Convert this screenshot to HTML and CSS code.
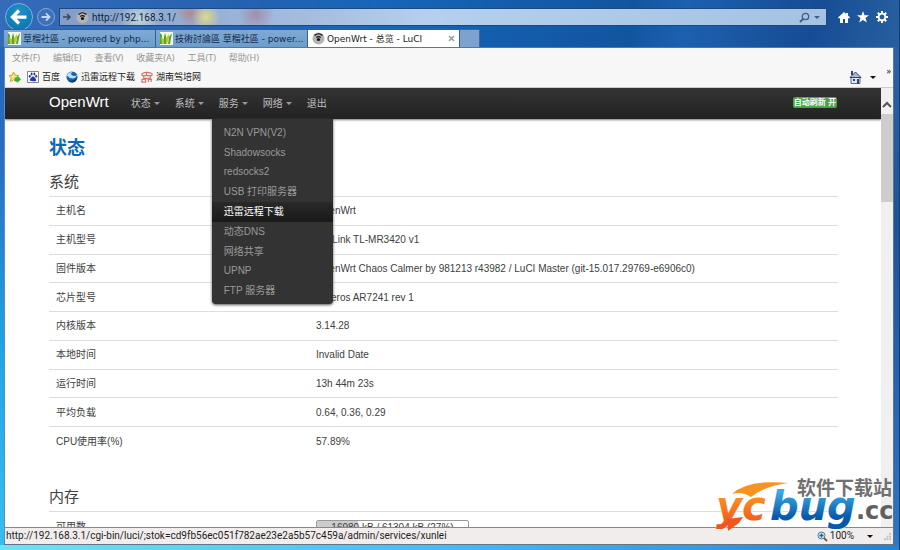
FILE: index.html
```
<!DOCTYPE html>
<html lang="zh-CN">
<head>
<meta charset="utf-8">
<title>OpenWrt - 总览 - LuCI</title>
<link rel="stylesheet" href="styles.css">
</head>
<body>
<svg class="defs" aria-hidden="true">
  <symbol id="leaf" viewBox="0 0 13 13"><path fill="#f3f8e8" d="M0 0h13v13H0z"/><path fill="#55a332" d="M0 1l2 2v9H0zM4 12V5l1-4 1 3v8zM8 12l1-7 3-4-1 5-1 6z"/><path fill="#b5cf2b" d="M2 12L1 5l3 2v5zM6 6l3-4v4l-2 6H6z"/></symbol>
  <symbol id="signal" viewBox="0 0 13 13"><circle cx="6.500" cy="6.500" r="6" fill="#b4b4b4"/><path d="M2.500 3.500q4-3.500 8 0M4.300 5.500q2.200-1.800 4.400 0" fill="none" stroke="#111" stroke-width="1.200"/><circle cx="6.500" cy="7.500" r="1.600" fill="#111"/></symbol>
</svg>
<div class="window">
  <header class="chrome">
    <div class="address-row">
      <button class="back" aria-label="后退"><svg viewBox="0 0 28 28"><path d="M22 14H8M14 7l-7 7 7 7" fill="none" stroke="#fff" stroke-width="3.500"/></svg></button>
      <button class="forward" aria-label="前进"><svg viewBox="0 0 18 18"><path d="M4 9h9M9 5l4 4-4 4" fill="none" stroke="#c3d9f2" stroke-width="2"/></svg></button>
      <div class="address">
        <svg class="go" viewBox="0 0 10 10"><path d="M1 5h7M5 2l3 3-3 3" fill="none" stroke="#39485e" stroke-width="1.500"/></svg>
        <svg class="fav"><use href="#signal"/></svg>
        <input class="url" aria-label="地址" value="http://192.168.3.1/">
        <svg class="search" viewBox="0 0 11 11"><circle cx="6.500" cy="4.500" r="3.200" fill="none" stroke="#435f83" stroke-width="1.300"/><path d="M4 7L1 10" stroke="#435f83" stroke-width="2"/></svg>
        <i class="caret caret-blue"></i>
      </div>
      <div class="tools">
        <button aria-label="主页"><svg viewBox="0 0 12 12"><path fill="#fff" d="M6 1L0 6.500l1 1L2 7v5h3V8h2v4h3V7l1 .5 1-1-2-2V2H8v1z"/></svg></button>
        <button aria-label="收藏夹"><svg viewBox="0 0 12 12"><path fill="#fff" d="M6 0l1.500 4.300H12L8.500 7l1.300 4.500L6 9l-3.800 2.500L3.500 7 0 4.300h4.500z"/></svg></button>
        <button aria-label="设置"><svg viewBox="0 0 12 12"><circle cx="6" cy="6" r="3.300" fill="none" stroke="#fff" stroke-width="1.800"/><path stroke="#fff" stroke-width="2" d="M6 0v2.500M6 9.500V12M0 6h2.500M9.500 6H12M1.800 1.800l1.700 1.700M8.500 8.500l1.700 1.700M10.200 1.800L8.500 3.500M3.500 8.500l-1.700 1.700"/></svg></button>
      </div>
    </div>
    <div class="tabs">
      <a class="tab" href="#"><svg class="fav"><use href="#leaf"/></svg><span>草榴社區 - powered by php...</span></a>
      <a class="tab" href="#"><svg class="fav"><use href="#leaf"/></svg><span>技術討論區 草榴社區 - power...</span></a>
      <a class="tab active" href="#"><svg class="fav"><use href="#signal"/></svg><span>OpenWrt - 总览 - LuCI</span><svg class="close" viewBox="0 0 7 7"><path d="M1 1l5 5M6 1L1 6" stroke="#999" stroke-width="1.500"/></svg></a>
      <button class="new-tab" aria-label="新建选项卡"></button>
    </div>
  </header>
  <div class="client">
    <nav class="menubar">
      <a href="#">文件(F)</a><a href="#">编辑(E)</a><a href="#">查看(V)</a><a href="#">收藏夹(A)</a><a href="#">工具(T)</a><a href="#">帮助(H)</a>
    </nav>
    <div class="bookmarks">
      <svg class="mark" viewBox="0 0 13 13"><path fill="#ffe477" stroke="#c3a024" d="M5 1l1.500 3.500 4 .5-3 2.500 1 4L5 9.500 1.500 11.500l1-4L0 5l3.500-.5z"/><path fill="#42ad32" d="M6 7h3V5l4 4-4 4v-2H6z"/></svg>
      <a href="#"><svg class="mark" viewBox="0 0 13 13"><path fill="#fff" stroke="#777" d="M.5.5h12v12H.5z"/><g fill="#233aa6"><path d="M6.500 6C8 6 10 9 10 10s-2 1.500-3.500 1S3 11 3 10s2-4 3.500-4z"/><ellipse cx="3" cy="5.800" rx="1.100" ry="1.500"/><ellipse cx="5" cy="3.300" rx="1.100" ry="1.600"/><ellipse cx="8" cy="3.300" rx="1.100" ry="1.600"/><ellipse cx="10" cy="5.800" rx="1.100" ry="1.500"/></g></svg>百度</a>
      <a href="#"><svg class="mark" viewBox="0 0 13 13"><circle cx="6.500" cy="6.500" r="6" fill="#1864ac"/><path fill="#b3e2ff" d="M1 5q1-4 6-4-3 2 0 4 3 1 5-1-1 4-5 4Q3 8 1 5z"/><path fill="#0b3678" d="M3 10q5 2 9-3-1 5-5 5.500-3 0-4-2.500z"/></svg>迅雷远程下载</a>
      <a href="#"><svg class="mark" viewBox="0 0 13 13"><path d="M1 5V3q5.500-3 11 0v2M1 5h11M3 5v3h7V5M1 9h4v3H1zM7 9h5M8 9v3M11 9v3M6 2v3" fill="none" stroke="#d97866" stroke-width="1.300"/></svg>湖南驾培网</a>
      <svg class="home" viewBox="0 0 13 13"><path fill="#dce5f5" stroke="#5a6c92" d="M2 6.500h9v6H2z"/><path fill="#a9b7d4" stroke="#334672" d="M6.500 1L1 6.500h11z"/><path fill="#334672" d="M2 0h2v4H2z"/><path fill="#30446f" d="M8 8h2v5H8zM4 8h2v2H4z"/></svg>
      <i class="caret caret-black"></i>
      <span class="more">»</span>
    </div>
    <div class="viewport">
      <div class="page">
        <div class="navbar">
          <a class="brand" href="#">OpenWrt</a>
          <a class="nav" href="#">状态<i class="caret"></i></a>
          <a class="nav" href="#">系统<i class="caret"></i></a>
          <div class="nav-group">
            <a class="nav" href="#">服务<i class="caret"></i></a>
            <div class="dropdown">
              <a href="#">N2N VPN(V2)</a><a href="#">Shadowsocks</a><a href="#">redsocks2</a><a href="#">USB 打印服务器</a><a class="selected" href="#">迅雷远程下载</a><a href="#">动态DNS</a><a href="#">网络共享</a><a href="#">UPNP</a><a href="#">FTP 服务器</a>
            </div>
          </div>
          <a class="nav" href="#">网络<i class="caret"></i></a>
          <a class="nav" href="#">退出</a>
          <button class="refresh">自动刷新 开</button>
        </div>
        <main class="content">
          <h1>状态</h1>
          <h2>系统</h2>
          <table class="system">
            <tr><th scope="row">主机名</th><td>OpenWrt</td></tr>
            <tr><th scope="row">主机型号</th><td>TP-Link TL-MR3420 v1</td></tr>
            <tr><th scope="row">固件版本</th><td>OpenWrt Chaos Calmer by 981213 r43982 / LuCI Master (git-15.017.29769-e6906c0)</td></tr>
            <tr><th scope="row">芯片型号</th><td>Atheros AR7241 rev 1</td></tr>
            <tr><th scope="row">内核版本</th><td>3.14.28</td></tr>
            <tr><th scope="row">本地时间</th><td>Invalid Date</td></tr>
            <tr><th scope="row">运行时间</th><td>13h 44m 23s</td></tr>
            <tr><th scope="row">平均负载</th><td>0.64, 0.36, 0.29</td></tr>
            <tr><th scope="row">CPU使用率(%)</th><td>57.89%</td></tr>
          </table>
          <h2 class="memory-title">内存</h2>
          <table class="memory">
            <tr><th scope="row">可用数</th><td><div class="meter"><div class="fill" style="width:27%"></div><span>16980 kB / 61304 kB (27%)</span></div></td></tr>
          </table>
        </main>
      </div>
      <div class="scrollbar"><svg viewBox="0 0 12 8"><path d="M2 7l4-4 4 4" fill="none" stroke="#555" stroke-width="2"/></svg><div class="thumb"></div></div>
    </div>
    <footer class="status">
      <span>http://192.168.3.1/cgi-bin/luci/;stok=cd9fb56ec051f782ae23e2a5b57c459a/admin/services/xunlei</span>
      <svg class="zoom" viewBox="0 0 11 11"><circle cx="4.500" cy="4.500" r="3.500" fill="#d6ecfa" stroke="#58788f"/><path d="M4.500 2.500v4M2.500 4.500h4" stroke="#176497" stroke-width="1.400"/><path d="M7 7l3 3" stroke="#8c5835" stroke-width="2"/></svg>
      <span>100%</span><i class="caret caret-black"></i>
      <svg class="grip" viewBox="0 0 8 8"><path fill="#bbb" d="M6 0h2v2H6zM3 3h2v2H3zM6 3h2v2H6zM0 6h2v2H0zM3 6h2v2H3zM6 6h2v2H6z"/></svg>
    </footer>
  </div>
</div>
<svg class="watermark" viewBox="0 0 180 55" role="img" aria-label="ycbug.cc 软件下载站">
  <defs>
    <linearGradient id="orange" x1="0" y1="0" x2="0" y2="1"><stop offset=".2" stop-color="#fb9a20"/><stop offset=".9" stop-color="#ef5720"/></linearGradient>
    <linearGradient id="blue" x1="0" y1="0" x2="0" y2="1"><stop offset=".2" stop-color="#3aa9e4"/><stop offset=".75" stop-color="#0759ac"/></linearGradient>
  </defs>
  <path fill="#f79420" d="M17 16Q33 1 73 5 50 8 36 19 27 13 17 16z"/>
  <g class="logo-letters">
    <text x="1" y="42" fill="url(#orange)">yc</text>
    <text x="55" y="42" fill="url(#blue)">bug</text>
  </g>
  <path fill="#ef5720" d="M12 41l16-2-4 6-11 8z"/>
  <text class="logo-domain" x="141" y="41">.cc</text>
  <text class="logo-caption" x="82" y="17">软件下载站</text>
</svg>
</body>
</html>
```
FILE: styles.css
```
* { box-sizing: border-box; }
html, body { height: 100%; }
body { margin: 0; overflow: hidden; position: relative; color: #404040; font: 10px/14px "Liberation Sans", "Noto Sans CJK SC", sans-serif; }
a { color: inherit; text-decoration: none; }
button { border: 0; padding: 0; background: none; }
svg { display: block; flex: none; }
.defs { position: absolute; width: 0; height: 0; }
.window { height: 100%; padding: 0 5px 5px 4px; display: flex; flex-direction: column; border-right: 1px solid #173d70;
  background: linear-gradient(90deg, #70e2f5, #48baf0 50%, #2781cb) bottom / 100% 5px no-repeat,
    linear-gradient(#2662b5 0, #286fc3 30%, #20a6e8 65%, #39bdf0) left / 4px 100% no-repeat,
    linear-gradient(#2e66ad, #1d5399 40%, #2c77c6) right / 5px 100% no-repeat, #1d5ba8; }
.chrome { height: 47px; flex: none; margin: 0 -5px 0 -4px; padding: 0 5px 0 4px;
  background: linear-gradient(100deg, #346cb9 0, #2761b0 25%, #1765b9 42%, #12559f 70%, #1d60ae 76%, #164c94 90%, #285f9f); }
.address-row { height: 29px; padding-top: 5px; display: flex; align-items: center; }
.back { width: 28px; height: 28px; border: 1px solid #7db4de; border-radius: 50%; background: radial-gradient(circle at 50% 30%, #2290c8, #0870ae); margin-left: 1px; flex: none; }
.forward { width: 18px; height: 18px; border: 1px solid #81a6d6; border-radius: 50%; background: #3e71b5; margin: 0 4px; flex: none; }
.address { flex: 1; height: 18px; padding: 0 6px 0 2px; display: flex; align-items: center; border: 1px solid #1e497f;
  background: radial-gradient(circle at 146px 8px, #dfd98a 0, transparent 14px),
    radial-gradient(circle at 130px 4px, #b08a94 0, transparent 14px),
    radial-gradient(circle at 80px 10px, #c0d6dc 0, transparent 20px),
    radial-gradient(circle at 196px 5px, #a08fae 0, transparent 18px),
    linear-gradient(90deg, #829dc7, #a7c0e1 35%, #b4d0ee 48%, #a4c2e2); }
.go { width: 10px; height: 10px; margin-right: 4px; }
.fav { width: 13px; height: 13px; }
.url { flex: 1; min-width: 0; height: 16px; border: 0; padding: 0 3px; background: none; outline: 0; color: #14223a; }
.url, .status { font: 10px/14px Roboto, "Noto Sans", sans-serif; }
.search { width: 11px; height: 11px; margin-right: 4px; }
.tools { display: flex; gap: 7px; padding: 0 6px 0 11px; }
.tools svg { width: 12px; height: 12px; }
.tabs { height: 18px; display: flex; font: 9px/14px "DejaVu Sans", "Noto Sans CJK SC", sans-serif; }
.tab { flex: 0 1 152px; min-width: 0; padding: 0 4px; display: flex; align-items: center; gap: 2px; color: #14284a; background: linear-gradient(#7fa9d5, #6c9dca); border: solid #385f95; border-width: 1px 1px 0 0; white-space: nowrap; }
.tab.active { color: #222; background: #fff; }
.close { width: 7px; height: 7px; margin-left: auto; }
.new-tab { width: 20px; background: #7da2cd; border: solid #3b69a4; border-width: 1px 1px 0 0; }
.client { flex: 1; min-height: 0; display: flex; flex-direction: column; background: #fff; border: 1px solid #61758d; border-left-color: #578bc1; }
.menubar, .bookmarks { flex: none; display: flex; align-items: center; background: #f7f7f7; font: 9px/14px "Noto Sans", "Noto Sans CJK SC", sans-serif; }
.menubar { height: 19px; padding-left: 7px; gap: 13px; color: #969696; }
.bookmarks { height: 21px; padding: 0 2px 0 4px; gap: 6px; color: #222; border-bottom: 1px solid #ccc; }
.bookmarks a { display: flex; align-items: center; gap: 3px; }
.mark { width: 12px; height: 12px; }
.home { width: 13px; height: 13px; margin: 0 2px 0 auto; }
.more { align-self: flex-start; line-height: 7px; padding-left: 4px; }
.viewport { flex: 1; min-height: 0; display: flex; }
.page { flex: 1; min-width: 0; overflow: hidden; background: #fff; }
.navbar { height: 31px; padding: 0 44px; display: flex; align-items: center; background: linear-gradient(#333, #222); color: #bfbfbf; box-shadow: 0 1px 2px #777; }
.brand { color: #fff; font-size: 15px; margin-right: 22px; margin-bottom: 3px; }
.nav { width: 44px; display: flex; align-items: center; gap: 3px; }
.caret { width: 0; height: 0; border: solid transparent; border-width: 3px 3px 0; border-top-color: #999; }
.caret-blue { border-top-color: #435f83; }
.caret-black { border-top-color: #111; }
.nav-group { position: relative; height: 31px; display: flex; align-items: center; }
.dropdown { position: absolute; z-index: 2; left: -7px; top: 31px; width: 121px; height: 185px; padding: 4px 0 3px; display: grid; grid-auto-rows: 1fr; background: #333; border-radius: 0 0 4px 4px; box-shadow: 0 1px 3px #555; color: #999; }
.dropdown a { padding: 0 12px; display: flex; align-items: center; white-space: nowrap; }
.dropdown .selected { color: #fff; background: linear-gradient(#292929, #191919); }
.refresh { margin-left: auto; margin-bottom: 3px; height: 11px; padding: 0 1px; border-radius: 2px; background: #46a546; color: #fff; font: bold 8px/11px "Liberation Sans", "Noto Sans CJK SC", sans-serif; }
.content { padding: 15px 43px 0 44px; }
h1 { margin: 0; font-size: 18px; line-height: 28px; color: #0b69b8; }
h2 { margin: 6px 0 0; font-size: 15px; line-height: 28px; font-weight: normal; }
table { width: 100%; border-collapse: separate; border-spacing: 0; table-layout: fixed; }
.system { height: 259px; }
th, td { padding: 1px 7px 0; border-top: 1px solid #ddd; text-align: left; font-weight: normal; }
th { width: 260px; }
td { white-space: nowrap; }
.memory-title { margin-top: 28px; }
.memory { height: 29px; }
.meter { position: relative; width: 153px; height: 14px; border: 1px solid #999; border-radius: 2px; text-align: center; }
.fill { position: absolute; inset: 0 auto 0 0; background: #ccc; }
.meter span { position: relative; }
.scrollbar { width: 12px; flex: none; padding-top: 12px; background: #f0f0f0; }
.scrollbar svg { width: 12px; height: 8px; }
.thumb { height: 88px; margin-top: 6px; background: #cdcdcd; }
.status { height: 17px; flex: none; padding: 0 2px 0 1px; display: flex; align-items: center; color: #1e1e1e; background: #f1eded; border-top: 1px solid #888; }
.zoom { width: 11px; height: 11px; margin: 0 2px 0 auto; }
.status .caret { margin: 0 11px 0 13px; }
.grip { width: 7px; height: 7px; }
.watermark { position: absolute; z-index: 3; right: 5px; bottom: 17px; width: 180px; height: 55px; overflow: hidden; }
.logo-letters { font: italic bold 40px "DejaVu Sans", sans-serif; stroke: #fff; stroke-width: 1px; paint-order: stroke; }
.logo-domain { font: bold 24px "DejaVu Sans", sans-serif; fill: #606060; }
.logo-caption { font: bold 19px "Noto Sans CJK SC", sans-serif; fill: #707070; }
```
